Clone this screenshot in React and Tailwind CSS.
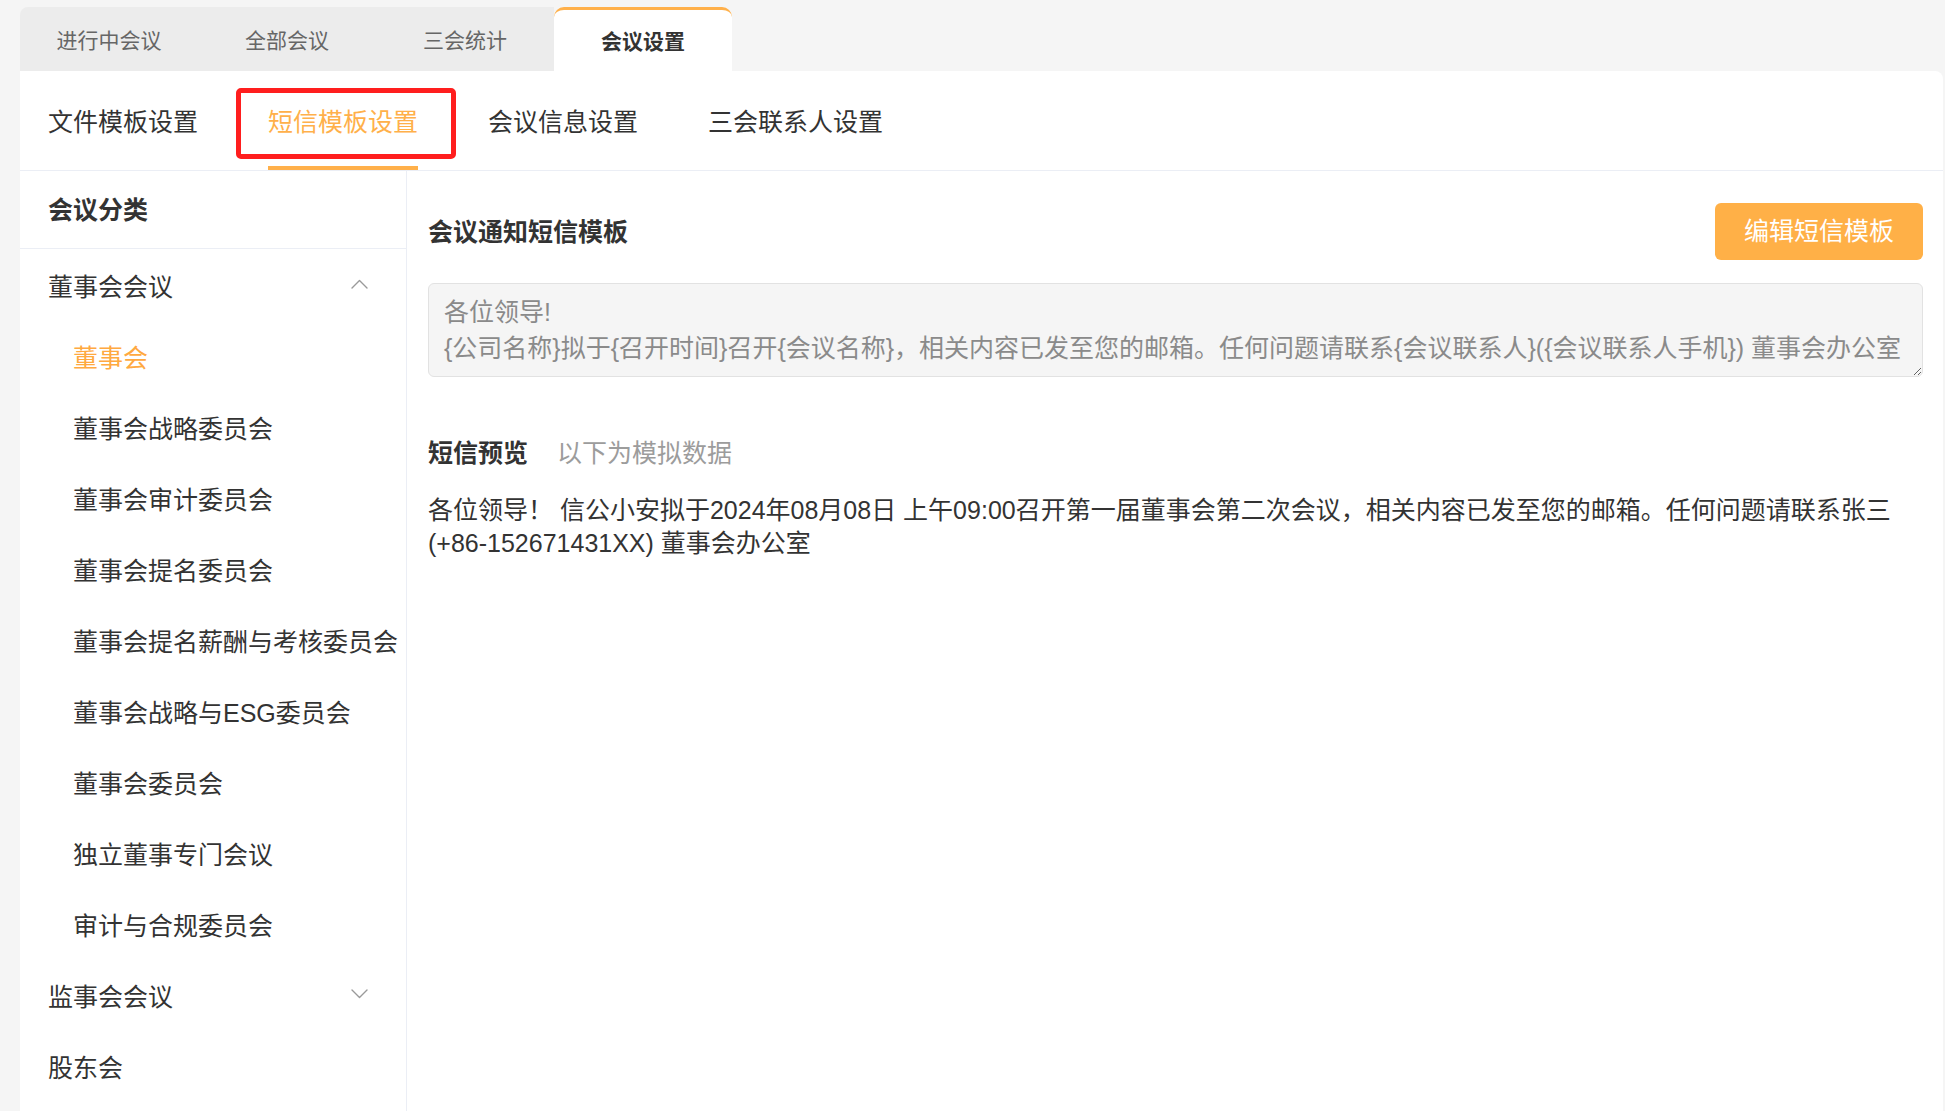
import React from "react";

function Chevron({ up }) {
  return (
    <svg width="17" height="10" viewBox="0 0 17 10" fill="none" className="shrink-0 mb-[7px]">
      <path
        d={up ? "M1 9 L8.5 1.5 L16 9" : "M1 1 L8.5 8.5 L16 1"}
        stroke="#9a9a9a"
        strokeWidth="1.4"
        strokeLinecap="round"
        strokeLinejoin="round"
      />
    </svg>
  );
}

export default function App() {
  const subTabs = ["文件模板设置", "短信模板设置", "会议信息设置", "三会联系人设置"];
  const children = [
    "董事会",
    "董事会战略委员会",
    "董事会审计委员会",
    "董事会提名委员会",
    "董事会提名薪酬与考核委员会",
    "董事会战略与ESG委员会",
    "董事会委员会",
    "独立董事专门会议",
    "审计与合规委员会",
  ];
  const template =
    "各位领导!\n{公司名称}拟于{召开时间}召开{会议名称}，相关内容已发至您的邮箱。任何问题请联系{会议联系人}({会议联系人手机}) 董事会办公室";

  return (
    <div className="h-[1111px] w-full overflow-hidden bg-[#f5f5f5] font-['Liberation_Sans','Noto_Sans_CJK_SC',sans-serif] text-[#333] flex flex-col">
      {/* top tabs */}
      <div className="flex ml-[20px] mt-[7px] h-[64px] shrink-0">
        <div className="flex bg-[#ececec] rounded-tl-[8px]">
          {["进行中会议", "全部会议", "三会统计"].map((t) => (
            <div key={t} className="w-[178px] pt-[4px] flex items-center justify-center text-[21px] text-[#666]">
              {t}
            </div>
          ))}
        </div>
        <div className="w-[178px] pt-[2px] bg-white rounded-t-[10px] border-t-[3px] border-[#ffb04a] flex items-center justify-center text-[21px] font-bold text-[#333]">
          会议设置
        </div>
      </div>

      {/* panel */}
      <div className="relative flex-1 ml-[20px] mr-[2px] bg-white rounded-tr-[8px] flex flex-col">
        <div className="h-[100px] shrink-0 border-b border-[#ebeef5] flex gap-[70px] pl-[28px]">
          {subTabs.map((t, i) => (
            <div
              key={t}
              className={
                i === 1
                  ? "h-full pt-[9px] flex items-center border-b-4 border-[#ffb04a] text-[25px] text-[#ffb04a]"
                  : "h-full pt-[9px] flex items-center border-b-4 border-transparent text-[25px] text-[#333]"
              }
            >
              {t}
            </div>
          ))}
        </div>

        <div className="flex flex-1 min-h-0">
          {/* sidebar */}
          <div className="w-[387px] shrink-0 border-r border-[#ebeef5] flex flex-col">
            <div className="h-[78px] pt-[2px] shrink-0 border-b border-[#ebeef5] flex items-center pl-[28px] text-[25px] font-bold text-[#333]">
              会议分类
            </div>
            <div className="pt-[3px] flex flex-col">
              <div className="h-[71px] flex items-center justify-between pl-[28px] pr-[38px] text-[25px] text-[#333]">
                <span>董事会会议</span>
                <Chevron up />
              </div>
              {children.map((c, i) => (
                <div
                  key={c}
                  className={
                    i === 0
                      ? "h-[71px] flex items-center pl-[53px] text-[25px] text-[#ffa940] whitespace-nowrap"
                      : "h-[71px] flex items-center pl-[53px] text-[25px] text-[#333] whitespace-nowrap"
                  }
                >
                  {c}
                </div>
              ))}
              <div className="h-[71px] flex items-center justify-between pl-[28px] pr-[38px] text-[25px] text-[#333]">
                <span>监事会会议</span>
                <Chevron />
              </div>
              <div className="h-[71px] flex items-center pl-[28px] text-[25px] text-[#333]">股东会</div>
            </div>
          </div>

          {/* main */}
          <div className="flex-1 pl-[21px] pr-[20px] pt-[32px] flex flex-col">
            <div className="h-[57px] flex items-center justify-between">
              <div className="pt-[2px] text-[25px] font-bold text-[#333]">会议通知短信模板</div>
              <button className="h-[57px] w-[208px] rounded-[6px] bg-[#ffb047] text-white text-[25px] flex items-center justify-center">
                编辑短信模板
              </button>
            </div>
            <textarea
              readOnly
              wrap="off"
              value={template}
              className="mt-[23px] h-[94px] w-full rounded-[6px] border border-[#e2e2e2] bg-[#f5f5f5] px-[15px] pt-[10px] pb-[10px] text-[25px] leading-[36px] text-[#8a8a8a] overflow-hidden outline-none font-['Liberation_Sans','Noto_Sans_CJK_SC',sans-serif]"
            />
            <div className="mt-[60px] flex items-center leading-[33px]">
              <span className="text-[25px] font-bold text-[#333]">短信预览</span>
              <span className="ml-[29px] text-[25px] text-[#9c9c9c]">以下为模拟数据</span>
            </div>
            <div className="mt-[24px] text-[25px] leading-[33px] text-[#333]">
              各位领导！ 信公小安拟于2024年08月08日 上午09:00召开第一届董事会第二次会议，相关内容已发至您的邮箱。任何问题请联系张三(+86-152671431XX) 董事会办公室
            </div>
          </div>
        </div>

        {/* red annotation box */}
        <div className="absolute left-[216px] top-[17px] w-[220px] h-[71px] border-[5px] border-[#ff1e1e] rounded-[5px] pointer-events-none" />
      </div>
    </div>
  );
}
